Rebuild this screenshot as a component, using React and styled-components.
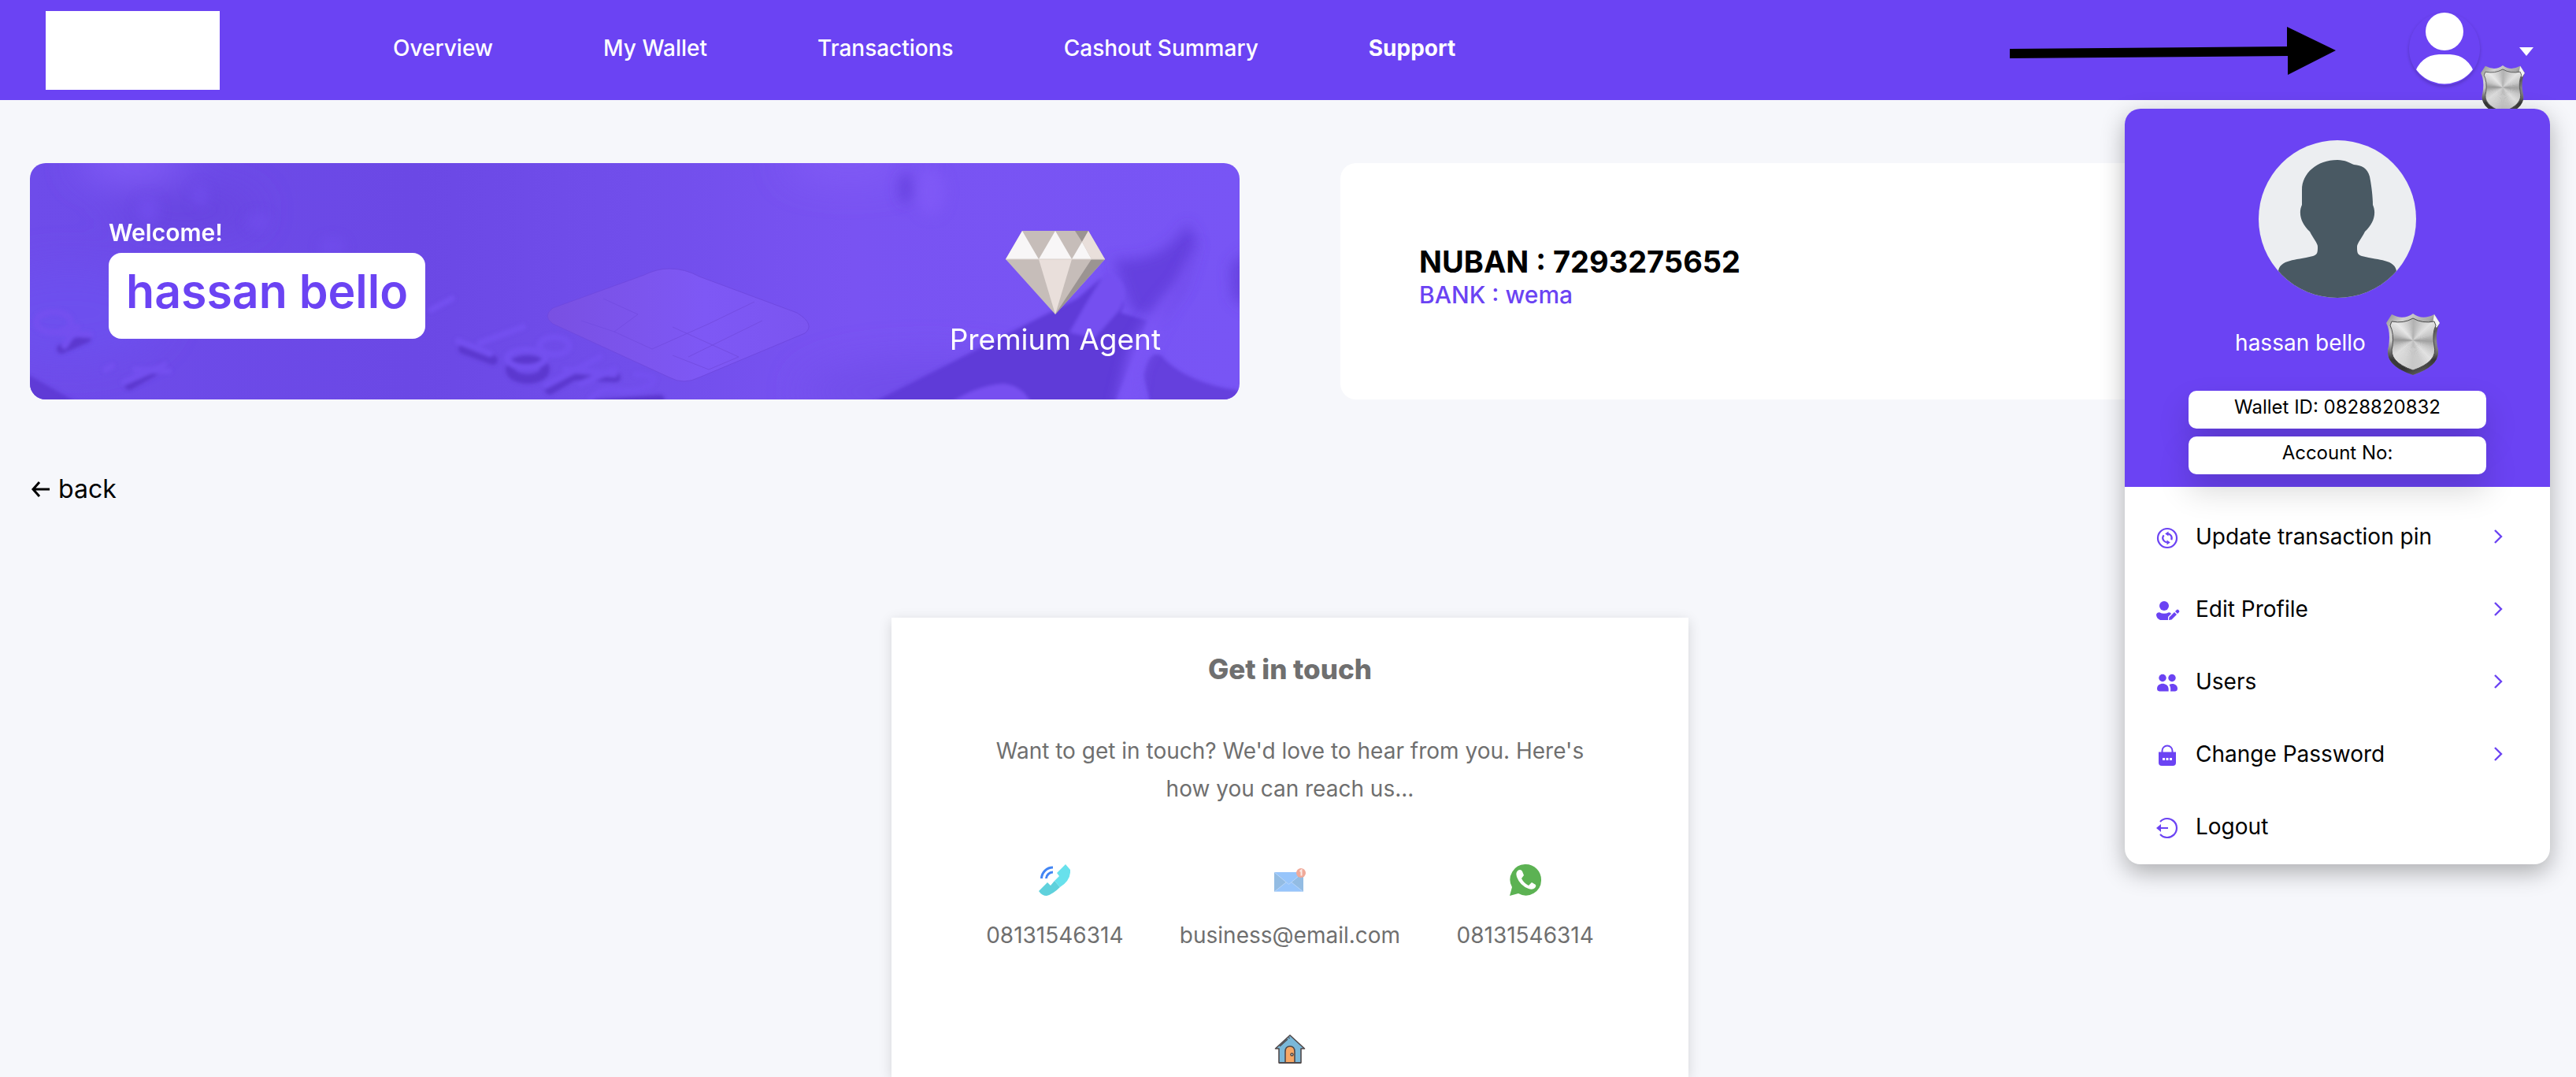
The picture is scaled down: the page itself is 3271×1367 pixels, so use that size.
import React, { useState } from "react";
import styled, { createGlobalStyle } from "styled-components";

const GlobalStyle = createGlobalStyle`
  * {
    box-sizing: border-box;
  }
  body {
    margin: 0;
    background: #f6f7fb;
    font-family: Inter, "Liberation Sans", sans-serif;
    color: #000;
  }
  h1, h2, h3, p, ul {
    margin: 0;
    padding: 0;
  }
  button {
    font-family: inherit;
    background: none;
    border: none;
    padding: 0;
    cursor: pointer;
  }
  a {
    color: inherit;
    text-decoration: none;
  }
  svg {
    display: block;
    flex-shrink: 0;
  }
`;

const navLinks = [
  "Overview",
  "My Wallet",
  "Transactions",
  "Cashout Summary",
  "Support",
];

/* ---------- icons ---------- */

// brushed metal: brightness for each direction round the centre
const metal = [
  [0, 158], [20, 196], [45, 226], [70, 204], [90, 200], [110, 212],
  [140, 222], [160, 196], [180, 150], [200, 200], [225, 232], [250, 206],
  [270, 178], [290, 198], [315, 226], [340, 200], [360, 158],
];

const shade = (deg) => {
  const i = metal.findIndex(([a]) => a > deg);
  const [a0, v0] = metal[i - 1];
  const [a1, v1] = metal[i];
  const v = Math.round(v0 + ((v1 - v0) * (deg - a0)) / (a1 - a0));
  return `rgb(${v},${v},${v})`;
};

const wedge = (deg) => {
  const at = (d) => {
    const r = (d * Math.PI) / 180;
    return `${34 + 60 * Math.cos(r)},${34 + 60 * Math.sin(r)}`;
  };
  return `34,34 ${at(deg - 1)} ${at(deg + 6)}`;
};

const ShieldIcon = ({ id, width, height }) => (
  <svg width={width} height={height} viewBox="0 0 68 78" aria-hidden="true">
    <defs>
      <linearGradient id={`${id}-rim`} x1="0" y1="0" x2="1" y2="1">
        <stop offset="0" stopColor="#8a8a8a" />
        <stop offset="0.2" stopColor="#d0d0d0" />
        <stop offset="0.45" stopColor="#a8a8a8" />
        <stop offset="0.6" stopColor="#5a5a5a" />
        <stop offset="0.8" stopColor="#b8b8b8" />
        <stop offset="1" stopColor="#333" />
      </linearGradient>
      <linearGradient id={`${id}-side`} x1="0" y1="0" x2="0" y2="1">
        <stop offset="0.45" stopColor="#222" stopOpacity="0" />
        <stop offset="0.75" stopColor="#222" stopOpacity="0.85" />
        <stop offset="1" stopColor="#222" stopOpacity="0.6" />
      </linearGradient>
      <clipPath id={`${id}-face`}>
        <path d="M7 10 Q22 13 34 6 Q46 13 61 10 L63 15 Q58 25 61 41 Q66 61 34 72 Q2 61 8 41 Q10 25 5 15 Z" />
      </clipPath>
    </defs>
    <path
      d="M7 1 Q22 9 34 0 Q46 9 61 1 L68 12 Q62 23 65 42 Q72 65 34 78 Q-4 65 3 42 Q6 23 0 12 Z"
      fill={`url(#${id}-rim)`}
    />
    <path
      d="M7 1 Q22 9 34 0 Q46 9 61 1 L68 12 Q62 23 65 42 Q72 65 34 78 Q-4 65 3 42 Q6 23 0 12 Z"
      fill={`url(#${id}-side)`}
    />
    <path d="M61 1 L68 12 L64 18 L59 12 Z" fill="#f4f4f4" />
    <g clipPath={`url(#${id}-face)`}>
      {Array.from({ length: 72 }, (_, i) => (
        <polygon key={i} points={wedge(i * 5)} fill={shade(i * 5)} />
      ))}
    </g>
    <path
      d="M7 10 Q22 13 34 6 Q46 13 61 10 L63 15 Q58 25 61 41 Q66 61 34 72 Q2 61 8 41 Q10 25 5 15 Z"
      fill="none"
      stroke="#4a4a4a"
      strokeWidth="1"
    />
  </svg>
);

const UserIcon = () => (
  <svg width="90" height="92" viewBox="0 0 90 92" aria-hidden="true">
    <defs>
      <clipPath id="user-clip">
        <circle cx="45" cy="46" r="44.5" />
      </clipPath>
    </defs>
    <ellipse cx="45" cy="24" rx="24" ry="24" fill="#fff" />
    <path
      clipPath="url(#user-clip)"
      d="M6 92 V80 Q14 54 38 53 H52 Q76 54 84 80 V92 Z"
      fill="#fff"
    />
  </svg>
);

const AvatarPicture = () => (
  <svg width="200" height="200" viewBox="0 0 200 200" role="img" aria-label="avatar">
    <defs>
      <clipPath id="avatar-clip">
        <circle cx="100" cy="100" r="100" />
      </clipPath>
    </defs>
    <g clipPath="url(#avatar-clip)">
      <rect width="200" height="200" fill="#eceef1" />
      <path
        d="M100 25 C110 25 116 29 121 31 C131 32 138 35 141 46 C143 56 145 70 145 82 C150 93 146 106 135 116 C131 124 125 131 125 135 C125 142 125 145 131 147 C143 150 154 151 160 153 C169 155 175 160 175 167 L160 200 H40 L25 167 C25 160 31 155 40 153 C46 151 57 150 69 147 C75 145 75 142 75 135 C75 131 69 124 65 116 C54 106 50 93 55 82 V63 C55 42 74 25 100 25 Z"
        fill="#495963"
      />
    </g>
  </svg>
);

const DiamondIcon = () => (
  <svg width="126" height="106" viewBox="0 0 126 106" aria-hidden="true">
    <path d="M21 0 H105 L126 36 L63 106 L0 36 Z" fill="#c6bdb9" />
    <path d="M21 0 L42 36 H0 Z" fill="#f8f6f7" />
    <path d="M63 0 L84 36 H42 Z" fill="#f8f6f7" />
    <path d="M97 14 L109 36 H84 Z" fill="#f8f6f7" />
    <path d="M88 0 H105 L97 14 Z" fill="#9b9492" />
    <path d="M105 0 L126 36 H109 L97 14 Z" fill="#e9dfdb" />
    <path d="M42 36 H84 L63 106 Z" fill="#e9dfdb" />
    <path d="M109 36 H126 L63 106 Z" fill="#9b9492" />
    <path d="M0 36 H126" stroke="#d9d0cc" strokeWidth="1" />
  </svg>
);

const PinIcon = () => (
  <svg width="28" height="28" viewBox="0 0 28 28" fill="none" stroke="#6b43f3" strokeWidth="2.2" aria-hidden="true">
    <circle cx="14" cy="14" r="12" />
    <path d="M9.8 17.6 A5.6 5.6 0 0 1 9.6 10.4 M13.5 8.4 A5.6 5.6 0 0 1 19.2 16.2 M9.6 17.4 Q11.5 19.6 14.5 19.5" />
    <path d="M15.5 5.4 L11.2 8.5 L15.5 11.6 Z M13.5 16.4 L17.8 19.5 L13.5 22.6 Z" fill="#6b43f3" stroke="none" />
  </svg>
);

const EditIcon = () => (
  <svg width="30" height="28" viewBox="0 0 30 28" fill="#6b43f3" aria-hidden="true">
    <circle cx="10" cy="8" r="6" />
    <path d="M4 16.2 Q10 19.5 16 16.2 Q18.5 16.5 19 18 L15 22 V26 H5 Q0 24 0 19 Q0.6 16.5 4 16.2 Z" />
    <path d="M16.5 22.5 L23 16 L26 19 L19.5 25.5 L16 26 Z" />
    <path d="M24 15 L26 13 Q27 12.2 28 13 L29 14 Q29.8 15 29 16 L27 18 Z" />
  </svg>
);

const UsersIcon = () => (
  <svg width="28" height="28" viewBox="0 0 28 28" fill="#6b43f3" aria-hidden="true">
    <circle cx="8" cy="7.5" r="4.7" />
    <circle cx="20" cy="7.5" r="4.7" />
    <path d="M1 21 C1 12.5 15 12.5 15.6 21 V24.5 H4 Q1 24 1 21 Z" />
    <path d="M16.5 16 C22 13.5 27 16.5 27 21 Q27 24 24 24.5 H18 C18.5 21 18.2 18.5 16.5 16 Z" />
  </svg>
);

const LockIcon = () => (
  <svg width="28" height="28" viewBox="0 0 28 28" aria-hidden="true">
    <path d="M7.5 11 V8 A6.5 6.5 0 0 1 20.5 8 V11" fill="none" stroke="#6b43f3" strokeWidth="2" />
    <path d="M3 9.5 H25 V23 Q25 27 21 27 H7 Q3 27 3 23 Z" fill="#6b43f3" />
    <path d="M8 17 H11 V20 H8 Z M12.5 17 H15.5 V20 H12.5 Z M17 17 H20 V20 H17 Z" fill="#fff" />
  </svg>
);

const LogoutIcon = () => (
  <svg width="28" height="28" viewBox="0 0 28 28" aria-hidden="true">
    <path d="M5 6 A12 12 0 1 1 5 22" fill="none" stroke="#6b43f3" strokeWidth="2.2" />
    <path d="M4 14 H15" stroke="#6b43f3" strokeWidth="2.2" />
    <path d="M0 14 L6 9 V19 Z" fill="#6b43f3" />
  </svg>
);

const ChevronIcon = () => (
  <svg width="12" height="18" viewBox="0 0 12 18" fill="none" stroke="#6b43f3" strokeWidth="2.4" aria-hidden="true">
    <path d="M2 1 L10 9 L2 17" />
  </svg>
);

const BackIcon = () => (
  <svg width="26" height="22" viewBox="0 0 26 22" fill="none" stroke="#000" strokeWidth="3" aria-hidden="true">
    <path d="M25 11 H4 M12 2 L4 11 L12 20" />
  </svg>
);

const PhoneIcon = () => (
  <svg width="40" height="40" viewBox="0 0 40 40" aria-hidden="true">
    <path d="M34 0 L40 7 Q41 20 27 29 L20 21 L26 15 L23 11 Z" fill="#68e1ec" />
    <path d="M20 21 L27 29 Q18 38 10 40 Q4 40 0 34 L11 23 L15 27 Z" fill="#5fd1dc" />
    <path d="M3.5 18 A14.5 14.5 0 0 1 18 4 M9.5 18 A8.5 8.5 0 0 1 18 10" fill="none" stroke="#4285f4" strokeWidth="3" />
  </svg>
);

const MailIcon = () => (
  <svg width="40" height="40" viewBox="0 0 40 40" aria-hidden="true">
    <rect y="10" width="37" height="25" fill="#97c5fb" />
    <path d="M0 10 L15 23 L0 35 Z M37 10 L22 23 L37 35 Z" fill="#93bce3" />
    <path d="M0 35 L15 23 M37 35 L22 23 M0 10 L18.5 25.5 L37 10 M0 34.5 H37" fill="none" stroke="#b9d6f8" strokeWidth="1" />
    <circle cx="34" cy="11" r="6" fill="#f0a999" />
    <path d="M32.5 9 L34.5 7.5 V14.5" fill="none" stroke="#fbeae6" strokeWidth="2" />
  </svg>
);

const WhatsappIcon = () => (
  <svg width="40" height="40" viewBox="0 0 40 40" aria-hidden="true">
    <path d="M20.5 0 A19.5 19.5 0 0 1 40 19.5 A19.5 19.5 0 0 1 11 37 L0 40 L3 29 A19.5 19.5 0 0 1 20.5 0 Z" fill="#5cb253" />
    <path
      d="M13 7 Q15 7 16 9 L18 14 L15 18 Q18 24 24 27 L28 23 L33 26 Q34 28 32 30 Q29 33 24 31 Q13 27 9 16 Q7 10 11 7.5 Z"
      fill="#fff"
    />
  </svg>
);

const HouseIcon = () => (
  <svg width="40" height="40" viewBox="0 0 40 40" stroke="#51494a" strokeWidth="1.6" strokeLinejoin="round" aria-hidden="true">
    <path d="M20 3 L38.5 20 H34 V38 H6 V20 H1.5 Z" fill="#7ab8d9" />
    <path d="M14 38 V24 Q14 17 20 17 Q26 17 26 24 V38 Z" fill="#f6a765" />
    <path d="M7 17 L17 8 M18.5 7 L19.5 6" fill="none" />
    <circle cx="22.5" cy="27.5" r="1.5" fill="#fff" />
    <path d="M6 38 H34" strokeWidth="2" />
  </svg>
);

// bank card close-up behind the welcome text
const CardArt = () => (
  <svg width="100%" height="100%" viewBox="0 0 1536 300" preserveAspectRatio="xMidYMid slice" aria-hidden="true">
    <defs>
      <linearGradient id="art-base" x1="0" y1="0" x2="1" y2="0">
        <stop offset="0" stopColor="#6e4cea" />
        <stop offset="0.32" stopColor="#6b48e5" />
        <stop offset="0.5" stopColor="#714eeb" />
        <stop offset="0.68" stopColor="#7953f2" />
        <stop offset="1" stopColor="#7855f5" />
      </linearGradient>
      <linearGradient id="art-chip" x1="0" y1="0" x2="1" y2="0">
        <stop offset="0" stopColor="#7950e2" />
        <stop offset="0.6" stopColor="#7e58f5" />
        <stop offset="1" stopColor="#7b55f0" />
      </linearGradient>
      <filter id="soft" x="-10%" y="-10%" width="120%" height="120%">
        <feGaussianBlur stdDeviation="2" />
      </filter>
      <filter id="softer" x="-50%" y="-50%" width="200%" height="200%">
        <feGaussianBlur stdDeviation="8" />
      </filter>
      <filter id="wide" x="-50%" y="-100%" width="200%" height="300%">
        <feGaussianBlur stdDeviation="24" />
      </filter>
    </defs>
    <rect width="1536" height="300" fill="url(#art-base)" />
    <g filter="url(#wide)">
      <ellipse cx="130" cy="0" rx="70" ry="20" fill="#8660fa" />
      <ellipse cx="50" cy="190" rx="120" ry="60" fill="#6d4fee" />
      <ellipse cx="200" cy="60" rx="90" ry="28" fill="#6745e0" />
      <ellipse cx="1040" cy="0" rx="80" ry="20" fill="#825bf6" />
      <ellipse cx="1140" cy="290" rx="160" ry="40" fill="#714dea" />
    </g>
    <g filter="url(#softer)">
      <ellipse cx="1112" cy="32" rx="9" ry="20" fill="#613cd8" opacity="0.7" />
      <ellipse cx="1144" cy="36" rx="18" ry="30" fill="#7f59f6" />
      {/* gap between the fingers */}
      <path d="M1376 122 Q1440 128 1470 76 L1482 100 L1464 160 L1436 196 L1400 190 Z" fill="#613dda" opacity="0.85" />
      <path d="M1546 110 L1524 130 L1526 170 L1546 186 Z" fill="#623edb" opacity="0.8" />
    </g>
    <g filter="url(#soft)">
      <path d="M1078 300 L1270 202 L1330 172 L1360 146 Q1400 165 1385 190 L1420 200 L1400 250 L1376 310 H1060 Z" fill="#5f3bd8" />
      <path d="M1366 138 Q1402 150 1384 186 L1352 222 L1320 215 L1340 180 Z" fill="#7550f0" />
      <path d="M1160 310 Q1200 282 1236 280 Q1262 282 1274 310 Z" fill="#7750f0" />
      <path d="M1424 310 L1414 270 Q1420 236 1436 244 Q1470 282 1546 290 V310 Z" fill="#6540dd" />
      <path d="M-10 264 L60 304 H-10 Z" fill="#5e3ad6" />
    </g>
    {/* lit edge of the finger */}
    <path
      d="M1484 100 L1470 150 L1440 200 L1412 260 L1404 310 H1378 L1396 236 L1430 180 L1456 150 Z"
      fill="#7a54f4"
      filter="url(#softer)"
    />
    {/* chip */}
    <path
      d="M812 134 Q832 134 850 144 L974 190 Q998 205 984 216 L850 272 Q830 282 812 272 L664 204 Q650 194 664 184 L780 142 Q796 134 812 134 Z"
      fill="url(#art-chip)"
      stroke="#6f49e0"
      strokeWidth="1"
    />
    <path
      d="M728 172 L772 192 L742 214 L790 236 M816 208 L900 246 M790 236 L862 204 M742 214 L700 200 M900 246 L862 262 L816 244 M862 204 L920 176 M930 200 L836 246"
      fill="none"
      stroke="#744de3"
      strokeWidth="1"
    />
    {/* embossed marks */}
    <g fill="none" strokeLinecap="round" filter="url(#soft)">
      <g stroke="#5b38cf" strokeWidth="12">
        <path d="M550 236 L588 250" />
        <ellipse cx="632" cy="262" rx="22" ry="12" />
        <path d="M660 288 L690 270 M690 270 L744 272" />
        <path d="M720 306 L800 300" />
        <path d="M40 236 L72 222 M126 282 L168 258" />
      </g>
      <g stroke="#7350ef" strokeWidth="8">
        <path d="M626 208 L572 228 M544 226 L584 242" />
        <ellipse cx="666" cy="232" rx="19" ry="11" />
        <ellipse cx="630" cy="248" rx="24" ry="11" />
        <path d="M724 246 L656 282 M680 262 L742 268 M742 262 L700 280" />
        <path d="M712 300 Q724 284 748 288 Q772 292 790 280 Q800 270 770 268" />
        <path d="M510 186 L536 172 M96 262 L104 258 M120 278 L170 256 M134 262 L176 264" />
        <ellipse cx="30" cy="202" rx="22" ry="13" />
        <path d="M20 214 L76 218 M44 232 L60 208" />
      </g>
    </g>
    <g filter="url(#softer)" fill="#7350ef" opacity="0.7">
      <ellipse cx="216" cy="42" rx="10" ry="14" />
      <ellipse cx="150" cy="60" rx="14" ry="18" />
      <ellipse cx="384" cy="106" rx="16" ry="10" />
      <ellipse cx="290" cy="74" rx="14" ry="10" />
    </g>
  </svg>
);

/* ---------- page ---------- */

const menuItems = [
  { label: "Update transaction pin", icon: <PinIcon />, arrow: true },
  { label: "Edit Profile", icon: <EditIcon />, arrow: true },
  { label: "Users", icon: <UsersIcon />, arrow: true },
  { label: "Change Password", icon: <LockIcon />, arrow: true },
  { label: "Logout", icon: <LogoutIcon />, arrow: false },
];

const contacts = [
  { text: "08131546314", href: "tel:08131546314", icon: <PhoneIcon /> },
  { text: "business@email.com", href: "mailto:business@email.com", icon: <MailIcon /> },
  { text: "08131546314", href: "#whatsapp", icon: <WhatsappIcon /> },
];

const App = () => {
  const [open, setOpen] = useState(true);

  return (
    <Page>
      <GlobalStyle />
      <Header>
        <Logo href="#home" aria-label="Home" />
        <Nav>
          {navLinks.map((link) => (
            <NavLink key={link} href="#nav" $active={link === "Support"}>
              {link}
            </NavLink>
          ))}
        </Nav>
        <Pointer viewBox="0 0 414 62" aria-hidden="true">
          <path d="M0 28 L352 25 V0 L414 30 L353 61 V37 L0 40 Z" />
        </Pointer>
        <UserButton type="button" aria-label="Account menu" onClick={() => setOpen(!open)}>
          <UserCircle>
            <UserIcon />
            <UserBadge>
              <ShieldIcon id="badge-small" width={56} height={64} />
            </UserBadge>
          </UserCircle>
          <Caret />
        </UserButton>
      </Header>

      {open && (
        <Menu>
          <MenuHead>
            <AvatarPicture />
            <MenuUser>
              <span>hassan bello</span>
              <ShieldIcon id="badge-large" width={68} height={78} />
            </MenuUser>
            <Chip>Wallet ID: 0828820832</Chip>
            <Chip>Account No:</Chip>
          </MenuHead>
          <MenuList>
            {menuItems.map((item) => (
              <li key={item.label}>
                <MenuButton type="button">
                  <MenuIcon>{item.icon}</MenuIcon>
                  <MenuLabel>{item.label}</MenuLabel>
                  {item.arrow && <ChevronIcon />}
                </MenuButton>
              </li>
            ))}
          </MenuList>
        </Menu>
      )}

      <Main>
        <Cards>
          <WelcomeCard>
            <Art>
              <CardArt />
            </Art>
            <Welcome>
              <h3>Welcome!</h3>
              <UserName>hassan bello</UserName>
            </Welcome>
            <Agent>
              <DiamondIcon />
              <p>Premium Agent</p>
            </Agent>
          </WelcomeCard>
          <BankCard>
            <h2>NUBAN : 7293275652</h2>
            <p>BANK : wema</p>
          </BankCard>
        </Cards>

        <BackButton type="button">
          <BackIcon />
          back
        </BackButton>

        <SupportCard>
          <h2>Get in touch</h2>
          <Intro>
            Want to get in touch? We'd love to hear from you. Here's how you
            can reach us...
          </Intro>
          <Contacts>
            {contacts.map((c) => (
              <Contact key={c.href} href={c.href}>
                {c.icon}
                {c.text}
              </Contact>
            ))}
          </Contacts>
          <HouseIcon />
        </SupportCard>
      </Main>
    </Page>
  );
};

const Page = styled.div`
  position: relative;
  display: flex;
  flex-direction: column;
  height: 100vh;
  overflow: hidden;
`;

const Header = styled.header`
  position: relative;
  display: flex;
  align-items: center;
  flex-shrink: 0;
  height: 127px;
  padding: 0 54px 0 58px;
  background: #6b43f3;
`;

const Logo = styled.a`
  width: 221px;
  height: 100px;
  background: #fff;
`;

const Nav = styled.nav`
  display: flex;
  gap: 140px;
  margin-left: 220px;
  padding-bottom: 6px;
`;

const NavLink = styled.a`
  color: #fff;
  font-size: 28px;
  line-height: 36px;
  font-weight: ${(props) => (props.$active ? 700 : 500)};
`;

/* hand-drawn arrow lying over the bar */
const Pointer = styled.svg`
  position: absolute;
  top: 34px;
  right: 305px;
  width: 414px;
  height: 62px;
`;

const UserButton = styled.button`
  display: flex;
  align-items: center;
  gap: 50px;
  margin-left: auto;
  padding-bottom: 4px;
`;

const UserCircle = styled.span`
  position: relative;
  border-radius: 50%;
  box-shadow: 0 2px 4px rgba(0, 0, 0, 0.2);
`;

const UserBadge = styled.span`
  position: absolute;
  top: 67px;
  left: 91px;
`;

const Caret = styled.span`
  margin-top: 8px;
  border: 9px solid transparent;
  border-top: 11px solid #fff;
  border-bottom: 0;
`;

const Menu = styled.div`
  position: absolute;
  top: 138px;
  right: 33px;
  z-index: 2;
  width: 540px;
  border-radius: 20px;
  overflow: hidden;
  background: #fff;
  box-shadow: 0 10px 30px rgba(0, 0, 0, 0.3);
`;

const MenuHead = styled.div`
  display: flex;
  flex-direction: column;
  align-items: center;
  height: 480px;
  padding-top: 40px;
  background: #6b43f3;
`;

const MenuUser = styled.div`
  display: flex;
  align-items: center;
  gap: 26px;
  margin: 20px 0;
  color: #fff;
  font-size: 28px;
  line-height: 32px;

  span {
    padding-bottom: 4px;
  }
`;

const Chip = styled.p`
  width: 378px;
  height: 48px;
  margin-bottom: 10px;
  border-radius: 10px;
  background: #fff;
  box-shadow: 0 20px 40px rgba(0, 0, 0, 0.16);
  font-size: 24px;
  line-height: 42px;
  text-align: center;
`;

const MenuList = styled.ul`
  list-style: none;
  padding: 17px 60px 2px 40px;

  li {
    height: 92px;
  }
`;

const MenuButton = styled.button`
  display: flex;
  align-items: center;
  width: 100%;
  height: 92px;
  color: #000;
  font-size: 28px;
  line-height: 36px;
  text-align: left;
`;

const MenuIcon = styled.span`
  width: 50px;
  padding-top: 4px;
`;

const MenuLabel = styled.span`
  flex: 1;
`;

const Main = styled.main`
  flex: 1;
  display: flex;
  flex-direction: column;
  padding: 80px 33px 0 38px;
`;

const Cards = styled.div`
  display: grid;
  grid-template-columns: 1fr 1fr;
  gap: 128px;
`;

const WelcomeCard = styled.section`
  position: relative;
  display: flex;
  justify-content: space-between;
  align-items: center;
  height: 300px;
  padding: 0 100px;
  border-radius: 20px;
  overflow: hidden;
  color: #fff;
`;

const Art = styled.div`
  position: absolute;
  inset: 0;
`;

const Welcome = styled.div`
  position: relative;
  padding-bottom: 10px;

  h3 {
    margin-bottom: 6px;
    font-size: 30px;
    line-height: 40px;
    font-weight: 600;
  }
`;

const UserName = styled.h1`
  height: 109px;
  padding: 0 22px;
  border-radius: 16px;
  background: #fff;
  color: #6b43f3;
  font-size: 59px;
  line-height: 98px;
  font-weight: 600;
`;

const Agent = styled.div`
  position: relative;
  display: flex;
  flex-direction: column;
  align-items: center;
  gap: 8px;
  padding-top: 34px;
  font-size: 37px;
  line-height: 48px;
`;

const BankCard = styled.section`
  height: 300px;
  padding: 100px;
  border-radius: 20px;
  background: #fff;

  h2 {
    font-size: 38px;
    line-height: 50px;
    font-weight: 700;
  }

  p {
    color: #6b43f3;
    font-size: 30px;
    line-height: 34px;
    font-weight: 500;
  }
`;

const BackButton = styled.button`
  display: flex;
  align-items: center;
  align-self: flex-start;
  gap: 10px;
  margin-top: 92px;
  font-size: 32px;
  line-height: 44px;
`;

const SupportCard = styled.section`
  flex: 1;
  display: flex;
  flex-direction: column;
  align-items: center;
  align-self: center;
  width: 100%;
  max-width: 1012px;
  margin-top: 141px;
  padding: 40px 58px 0;
  background: #fff;
  box-shadow: 0 4px 16px rgba(0, 0, 0, 0.14);
  color: #6f6f6f;

  h2 {
    font-size: 35px;
    line-height: 50px;
    font-weight: 800;
  }
`;

const Intro = styled.p`
  max-width: 780px;
  margin-top: 55px;
  font-size: 28px;
  line-height: 48px;
  text-align: center;
`;

const Contacts = styled.div`
  display: grid;
  grid-template-columns: repeat(3, 1fr);
  width: 100%;
  margin: 72px 0 106px;
`;

const Contact = styled.a`
  display: flex;
  flex-direction: column;
  align-items: center;
  gap: 32px;
  font-size: 28px;
  line-height: 36px;
`;

export default App;
